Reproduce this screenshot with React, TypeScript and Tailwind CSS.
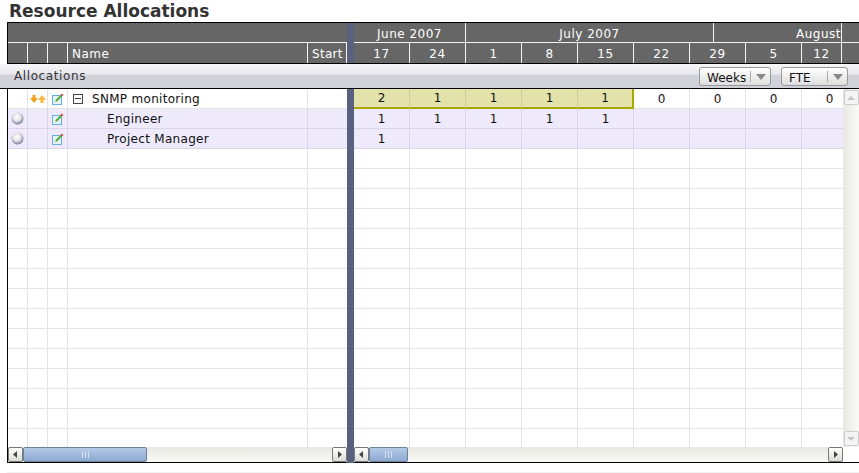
import React from "react";

const font = { fontFamily: '"DejaVu Sans", sans-serif' };

const weeks = ["17", "24", "1", "8", "15", "22", "29", "5", "12"];
const totals = ["2", "1", "1", "1", "1", "0", "0", "0", "0"];
const engineer = ["1", "1", "1", "1", "1", "", "", "", ""];
const manager = ["1", "", "", "", "", "", "", "", ""];
const emptyRows = Array.from({ length: 15 }, (_, i) => i);

const PencilIcon = () => (
  <svg width="13" height="14" viewBox="0 0 13 14">
    <rect x="1.5" y="3.5" width="9" height="9" fill="#e6f3fc" stroke="#6aaee0" />
    <path d="M3.5 10.5 L4.3 8.2 L9.5 3 L11 4.5 L5.8 9.7 Z" fill="#52ad3e" />
    <path d="M9.5 3 L10.5 1.5 L12.5 3 L11 4.5 Z" fill="#dc4c38" />
    <path d="M3.5 10.5 L4.3 8.2 L5.8 9.7 Z" fill="#f2e4ac" />
  </svg>
);

const ArrowsIcon = () => (
  <svg width="16" height="8" viewBox="0 0 16 8">
    <path d="M0 3 H2.5 V0 H5.5 V3 H8 L4 8 Z" fill="#f29f1c" />
    <path d="M8 5 H10.5 V8 H13.5 V5 H16 L12 0 Z" fill="#fbb93c" />
  </svg>
);

const BallIcon = ({ id }: { id: string }) => (
  <svg width="13" height="13" viewBox="0 0 13 13">
    <defs>
      <radialGradient id={id} cx="0.45" cy="0.38" r="0.68">
        <stop offset="0" stopColor="#ffffff" />
        <stop offset="0.45" stopColor="#e6e6ec" />
        <stop offset="0.78" stopColor="#9a9eb4" />
        <stop offset="1" stopColor="#4e5470" />
      </radialGradient>
    </defs>
    <circle cx="6.5" cy="6.5" r="6" fill={`url(#${id})`} />
  </svg>
);

const Caret = ({ dir }: { dir: "left" | "right" | "up" | "down" }) => {
  const points = {
    left: "5,1 5,8 1,4.5",
    right: "2,1 2,8 6,4.5",
    up: "1,6 9,6 5,2",
    down: "1,2 9,2 5,6",
  }[dir];
  const fill = dir === "up" || dir === "down" ? "#c4c4c4" : "#444";
  const size = dir === "up" || dir === "down" ? { w: 10, h: 8 } : { w: 7, h: 9 };
  return (
    <svg width={size.w} height={size.h} viewBox={`0 0 ${size.w} ${size.h}`}>
      <polygon points={points} fill={fill} />
    </svg>
  );
};

const ScrollButton = ({ dir }: { dir: "left" | "right" }) => (
  <div className="flex h-[15px] w-[15px] shrink-0 items-center justify-center rounded-[2px] border border-[#777] bg-gradient-to-b from-white to-[#dcdcd6]">
    <Caret dir={dir} />
  </div>
);

const Thumb = ({ width }: { width: string }) => (
  <div className={`flex h-[15px] shrink-0 items-center justify-center gap-[2px] rounded-[2px] border border-[#6d809c] bg-gradient-to-b from-[#b4cae6] to-[#8eaad2] ${width}`}>
    <span className="h-[7px] w-px bg-[#d4e0f0]" />
    <span className="h-[7px] w-px bg-[#d4e0f0]" />
    <span className="h-[7px] w-px bg-[#d4e0f0]" />
  </div>
);

const HScroll = ({ thumb }: { thumb: string }) => (
  <div className="flex h-[15px] shrink-0 bg-gradient-to-b from-[#e8e8e2] to-[#fafaf8]">
    <ScrollButton dir="left" />
    <Thumb width={thumb} />
    <div className="flex-1" />
    <ScrollButton dir="right" />
  </div>
);

const Select = ({ label, width }: { label: string; width: string }) => (
  <div className={`flex h-[19px] items-center rounded-[3px] border border-[#999] bg-gradient-to-b from-white to-[#dedede] text-[12px] tracking-normal text-[#111] ${width}`}>
    <span className="flex-1 pt-[2px] pl-[7px] leading-none">{label}</span>
    <span className="h-[11px] w-px bg-[#aaa]" />
    <span className="flex w-[19px] justify-center">
      <svg width="10" height="6" viewBox="0 0 10 6">
        <polygon points="0,0 10,0 5,6" fill="#888" />
      </svg>
    </span>
  </div>
);

const LeftRow = ({
  ball,
  arrows,
  name,
  sub,
  id,
}: {
  ball?: boolean;
  arrows?: boolean;
  name?: string;
  sub?: boolean;
  id?: string;
}) => {
  const tone = sub ? "bg-[#eeeafc] border-[#d9d4e6]" : "bg-white border-[#e4e4e4]";
  return (
    <div className={`flex h-5 shrink-0 border-b ${tone}`}>
      <div className="flex w-5 items-center justify-center border-r border-inherit">
        {ball && <BallIcon id={id ?? "ball"} />}
      </div>
      <div className="flex w-5 items-center justify-center border-r border-inherit">{arrows && <ArrowsIcon />}</div>
      <div className="flex w-5 items-center justify-center border-r border-inherit">{name && <PencilIcon />}</div>
      <div className="flex w-60 items-center overflow-hidden border-r border-inherit text-[12px] text-[#111]">
        {name && !sub && (
          <span className="mr-[9px] ml-[5px] flex h-[10px] w-[10px] items-center justify-center border border-[#444]">
            <span className="h-px w-[6px] bg-[#333]" />
          </span>
        )}
        {name && <span className={`tracking-[0.3px] whitespace-nowrap ${sub ? "pl-[39px]" : ""}`}>{name}</span>}
      </div>
      <div className="flex-1" />
    </div>
  );
};

const RightRow = ({ cells, sub, highlight }: { cells: string[]; sub?: boolean; highlight?: boolean }) => (
  <div className={`flex h-5 shrink-0 border-b ${sub ? "bg-[#eeeafc] border-[#d9d4e6]" : "bg-white border-[#e4e4e4]"}`}>
    {weeks.map((_, i) => {
      const hit = highlight && i < 5;
      const last = highlight && i === 4;
      return (
        <div
          key={i}
          className={`-mb-px flex h-5 w-14 shrink-0 items-center justify-center text-[12px] text-[#111] ${
            hit
              ? `border-b-2 border-b-[#a8a800] bg-[#e2e2aa] ${last ? "border-r-2 border-r-[#a8a800]" : "border-r border-r-[#cfcf9e]"}`
              : "border-r border-inherit"
          }`}
        >
          {cells[i]}
        </div>
      );
    })}
  </div>
);

export default function App() {
  return (
    <div className="h-[473px] w-[859px] overflow-hidden bg-white" style={font}>
      <h1 className="h-[22px] pl-[9px] text-[17px] leading-[22px] font-bold text-[#333]">Resource Allocations</h1>

      {/* Header */}
      <div className="ml-[7px] flex h-[42px] border-y border-l border-black bg-[#666] text-[12px] leading-[22px] tracking-[0.5px] text-white">
        <div className="flex w-[339px] shrink-0 flex-col">
          <div className="h-5 border-b border-[#f4f4f4]" />
          <div className="flex h-5">
            <div className="w-5 border-r border-[#f4f4f4]" />
            <div className="w-5 border-r border-[#f4f4f4]" />
            <div className="w-5 border-r border-[#f4f4f4]" />
            <div className="w-60 border-r border-[#f4f4f4] pl-[4px]">Name</div>
            <div className="flex-1 border-r border-[#f4f4f4] pl-[4px] tracking-[0.3px]">Start</div>
          </div>
        </div>
        <div className="w-[7px] shrink-0 bg-[#5a6080]" />
        <div className="flex min-w-0 flex-1 flex-col">
          <div className="flex h-5 border-b border-[#f4f4f4]">
            <div className="w-28 shrink-0 border-r border-[#f4f4f4] text-center">June 2007</div>
            <div className="w-[248px] shrink-0 border-r border-[#f4f4f4] text-center">July 2007</div>
            <div className="w-[128px] shrink-0 overflow-hidden border-r border-[#f4f4f4] text-right">August</div>
          </div>
          <div className="flex h-5">
            {weeks.map((w, i) => (
              <div key={i} className={`shrink-0 border-r border-[#f4f4f4] text-center ${i === 8 ? "w-[40px]" : "w-14"}`}>
                {w}
              </div>
            ))}
          </div>
        </div>
      </div>

      {/* Toolbar */}
      <div className="flex h-[25px] items-center justify-between border-b border-black bg-[linear-gradient(to_bottom,#f6f6f8,#e8e8ec_42%,#d2d2da_48%,#d0d0d8)] pr-[11px] pl-[14px] text-[12px] tracking-[0.6px] text-[#333]">
        <span className="-mt-[1px]">Allocations</span>
        <div className="flex gap-[10px] pt-[1px]">
          <Select label="Weeks" width="w-[72px]" />
          <Select label="FTE" width="w-[67px]" />
        </div>
      </div>

      {/* Body */}
      <div className="ml-[7px] flex h-[374px] border-b border-l border-black">
        <div className="flex w-[339px] shrink-0 flex-col">
          <div className="flex flex-1 flex-col overflow-hidden">
            <LeftRow arrows name="SNMP monitoring" />
            <LeftRow ball sub name="Engineer" id="ball-a" />
            <LeftRow ball sub name="Project Manager" id="ball-b" />
            {emptyRows.map((r) => (
              <LeftRow key={r} />
            ))}
          </div>
          <HScroll thumb="w-[124px]" />
        </div>
        <div className="-mb-px w-[7px] shrink-0 bg-[#5a6080]" />
        <div className="flex min-w-0 flex-1">
          <div className="flex w-[489px] shrink-0 flex-col">
            <div className="flex flex-1 flex-col overflow-hidden">
              <RightRow cells={totals} highlight />
              <RightRow cells={engineer} sub />
              <RightRow cells={manager} sub />
              {emptyRows.map((r) => (
                <RightRow key={r} cells={[]} />
              ))}
            </div>
            <HScroll thumb="w-[39px]" />
          </div>
          <div className="flex flex-1 flex-col">
            <div className="flex h-[358px] flex-col items-center justify-between bg-gradient-to-r from-[#e8e8e2] to-[#fafaf8] py-px">
              <div className="flex h-[15px] w-[15px] items-center justify-center rounded-[2px] border border-[#ccc] bg-[#f4f4f4]">
                <Caret dir="up" />
              </div>
              <div className="flex h-[15px] w-[15px] items-center justify-center rounded-[2px] border border-[#ccc] bg-[#f4f4f4]">
                <Caret dir="down" />
              </div>
            </div>
          </div>
        </div>
      </div>
      <div className="mt-[9px] ml-[7px] h-px bg-[#f2f2f2]" />
    </div>
  );
}
